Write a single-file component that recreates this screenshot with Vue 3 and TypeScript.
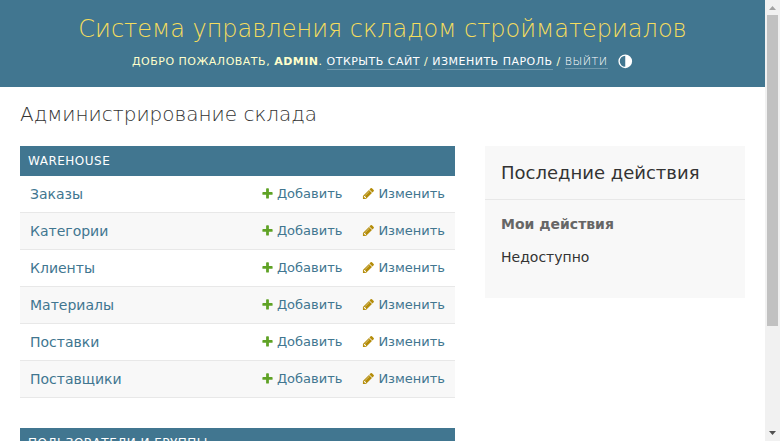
<script setup lang="ts">
interface Model {
  name: string
}

const models: Model[] = [
  { name: 'Заказы' },
  { name: 'Категории' },
  { name: 'Клиенты' },
  { name: 'Материалы' },
  { name: 'Поставки' },
  { name: 'Поставщики' },
]
</script>

<template>
  <div class="window">
    <div class="page">
      <header class="header">
        <h1 class="site-name">Система управления складом стройматериалов</h1>
        <div class="user-tools">
          <span>Добро пожаловать, <strong>admin</strong>. <a href="#">Открыть сайт</a> / <a href="#">Изменить пароль</a> / </span>
          <button class="logout" type="button">Выйти</button>
          <button class="theme" type="button" aria-label="Тема">
            <svg viewBox="0 0 24 24">
              <path d="M12 2a10 10 0 1 0 0 20a10 10 0 0 0 0-20zM12 20a8 8 0 0 1 0-16z" fill-rule="evenodd" />
            </svg>
          </button>
        </div>
      </header>

      <main class="content">
        <h2 class="title">Администрирование склада</h2>
        <div class="columns">
          <div class="apps">
            <section class="module">
              <h3 class="caption">Warehouse</h3>
              <div v-for="model in models" :key="model.name" class="row">
                <a class="model" href="#">{{ model.name }}</a>
                <a class="action add" href="#">
                  <svg viewBox="0 0 1792 1792">
                    <path d="M1600 796v192q0 40-28 68t-68 28h-416v416q0 40-28 68t-68 28h-192q-40 0-68-28t-28-68v-416h-416q-40 0-68-28t-28-68v-192q0-40 28-68t68-28h416v-416q0-40 28-68t68-28h192q40 0 68 28t28 68v416h416q40 0 68 28t28 68z" />
                  </svg>
                  <span>Добавить</span>
                </a>
                <a class="action change" href="#">
                  <svg viewBox="0 0 1792 1792">
                    <path d="M491 1536l91-91-235-235-91 91v107h128v128h107zm523-928q0-22-22-22-10 0-17 7l-542 542q-7 7-7 17 0 22 22 22 10 0 17-7l542-542q7-7 7-17zm-54-192l416 416-832 832h-416v-416zm683 96q0 53-37 90l-166 166-416-416 166-165q36-38 90-38 53 0 91 38l235 234q37 39 37 91z" />
                  </svg>
                  <span>Изменить</span>
                </a>
              </div>
            </section>
            <section class="module">
              <h3 class="caption">Пользователи и группы</h3>
            </section>
          </div>

          <aside class="recent">
            <h2>Последние действия</h2>
            <h3>Мои действия</h3>
            <p>Недоступно</p>
          </aside>
        </div>
      </main>
    </div>

    <div class="scrollbar">
      <svg class="arrow up" viewBox="0 0 15 15"><path d="M4 10h7L7.5 6z" /></svg>
      <div class="thumb"></div>
      <svg class="arrow down" viewBox="0 0 15 15"><path d="M4 5h7L7.5 9z" /></svg>
    </div>
  </div>
</template>

<style>
body {
  margin: 0;
  overflow: hidden;
}
</style>

<style scoped>
.window {
  display: flex;
  width: 100%;
  height: 100vh;
  overflow: hidden;
  background: #fff;
  color: #333;
  font-family: "DejaVu Sans", sans-serif;
  font-size: 14px;
}

h1,
h2,
h3,
p {
  margin: 0;
}

a {
  color: #417690;
  text-decoration: none;
}

.page {
  flex: 1;
  min-width: 0;
  overflow: hidden;
}

.header {
  box-sizing: border-box;
  height: 87px;
  padding-top: 15px;
  background: #417690;
  color: #ffc;
  text-align: center;
}

.site-name {
  color: #f5dd5d;
  font-size: 24px;
  font-weight: 300;
  line-height: 28px;
  white-space: nowrap;
}

.user-tools {
  display: flex;
  justify-content: center;
  height: 20px;
  margin-top: 10px;
  font-size: 11px;
  font-weight: 400;
  letter-spacing: 0.5px;
  line-height: 17px;
  text-transform: uppercase;
  white-space: pre;
}

.user-tools a {
  padding-bottom: 1px;
  border-bottom: 1px solid rgba(255, 255, 255, 0.25);
  color: #fff;
}

button {
  padding: 0;
  border: 0;
  background: none;
  font: inherit;
  letter-spacing: inherit;
  text-transform: inherit;
}

.logout {
  height: 16px;
  border-bottom: 1px solid rgba(255, 255, 255, 0.25);
  color: #fff;
  font-weight: 300;
}

.theme {
  display: flex;
  height: 17px;
  margin-left: 9px;
}

.theme svg {
  width: 16.5px;
  height: 16.5px;
  fill: #fff;
}

.content {
  padding: 15px 20px 0;
}

.title {
  font-size: 20px;
  font-weight: 300;
  line-height: 25px;
}

.columns {
  display: flex;
  align-items: flex-start;
  gap: 30px;
  margin-top: 19px;
}

.apps {
  flex: 1;
}

.module {
  margin-bottom: 30px;
}

.caption {
  padding: 8px;
  background: #417690;
  color: #fff;
  font-size: 12px;
  font-weight: 400;
  letter-spacing: 0.5px;
  line-height: 14px;
  text-transform: uppercase;
}

.row {
  display: flex;
  box-sizing: border-box;
  height: 37px;
  padding: 0 10px;
  border-bottom: 1px solid #e8e8e8;
  line-height: 36px;
}

.row:nth-child(odd) {
  background: #f8f8f8;
}

.model {
  flex: 1;
}

.action {
  display: flex;
  gap: 3px;
  font-size: 13px;
}

.action svg {
  width: 13px;
  height: 13px;
  margin-top: 11px;
}

.add {
  margin-right: 20px;
}

.add path {
  fill: #5fa225;
}

.change path {
  fill: #b48c08;
}

.recent {
  box-sizing: border-box;
  width: 260px;
  height: 152px;
  background: #f8f8f8;
}

.recent h2 {
  padding: 16px;
  border-bottom: 1px solid #e8e8e8;
  font-size: 18px;
  font-weight: 400;
  line-height: 21px;
}

.recent h3 {
  padding: 16px 16px 0;
  color: #666;
  font-size: 14px;
  line-height: 17px;
}

.recent p {
  padding: 16px 16px 0;
  line-height: 17px;
}

.scrollbar {
  display: flex;
  flex-direction: column;
  width: 15px;
  background: #f1f1f1;
}

.arrow {
  width: 15px;
  height: 15px;
}

.up {
  fill: #a3a3a3;
}

.down {
  margin-top: auto;
  fill: #505050;
}

.thumb {
  height: 311px;
  margin: 0 2px;
  background: #c1c1c1;
}
</style>
